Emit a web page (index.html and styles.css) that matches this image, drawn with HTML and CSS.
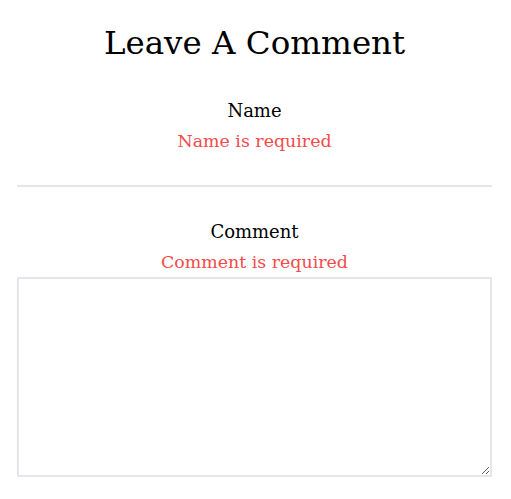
FILE: index.html
```html
<!DOCTYPE html>
<html>
<head>
<meta charset="utf-8">
<link rel="stylesheet" href="styles.css">
</head>
<body>
<div class="form">
  <h1 class="title">Leave A Comment</h1>
  <div class="field first">
    <label class="label">Name</label>
    <div class="error">Name is required</div>
  </div>
  <hr class="rule">
  <div class="field last">
    <label class="label">Comment</label>
    <div class="error">Comment is required</div>
    <textarea class="textarea"></textarea>
  </div>
</div>
</body>
</html>
```
FILE: styles.css
```css
html, body { margin: 0; padding: 0; background: #fff; }
body { font-family: "DejaVu Serif", Georgia, serif; color: #000; }
.form { padding: 0 19px 0 17px; display: flex; flex-direction: column; align-items: stretch; }
.title { font-weight: normal; font-size: 32.5px; text-align: center; margin: 22px 0 0; line-height: 42px; }
.field { display: flex; flex-direction: column; align-items: center; }
.first { margin-top: 32px; }
.label { font-size: 18px; line-height: 30px; }
.error { font-size: 17.4px; line-height: 30px; color: #f44a4a; }
.rule { width: 100%; margin: 29px 0 0; border: 0; border-top: 2px solid #e6e6ea; height: 0; }
.last { margin-top: 30px; }
.textarea { align-self: stretch; box-sizing: border-box; height: 200px; margin: 0; border: 2px solid #e6e6ea; resize: vertical; }
```
